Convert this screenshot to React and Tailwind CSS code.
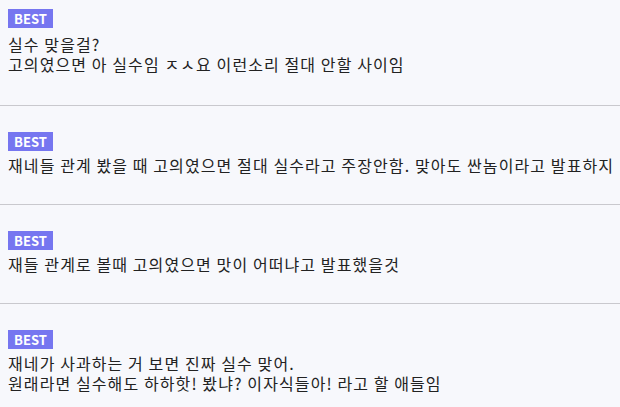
const comments = [
  {
    lines: ["실수 맞을걸?", "고의였으면 아 실수임 ㅈㅅ요 이런소리 절대 안할 사이임"],
    first: true,
  },
  {
    lines: [
      "재네들 관계 봤을 때 고의였으면 절대 실수라고 주장안함. 맞아도 싼놈이라고 발표하지",
    ],
  },
  { lines: ["재들 관계로 볼때 고의였으면 맛이 어떠냐고 발표했을것"] },
  {
    lines: [
      "재네가 사과하는 거 보면 진짜 실수 맞어.",
      "원래라면 실수해도 하하핫! 봤냐? 이자식들아! 라고 할 애들임",
    ],
  },
];

// Best comment badge
const BestBadge = () => (
  <div className="flex h-[19px] w-[45px] items-center justify-center bg-[#7676f0] text-[13px] font-bold leading-none text-white">
    BEST
  </div>
);

const CommentItem = ({ lines, first }) => (
  <div
    className={
      first
        ? "px-2 pt-[9px] pb-[31px] border-b border-[#c9c9ce]"
        : "px-2 pt-[26px] pb-[29px] border-b border-[#c9c9ce]"
    }
  >
    <BestBadge />
    <div
      className={
        first
          ? "mt-[6px] text-[16px] leading-[20px] tracking-[1.1px] text-[#222]"
          : "mt-[4px] text-[16px] leading-[20px] tracking-[1.1px] text-[#222]"
      }
    >
      {lines.map((line, i) => (
        <p key={i} className="h-[20px] whitespace-nowrap">
          {line}
        </p>
      ))}
    </div>
  </div>
);

export default function App() {
  return (
    <div
      className="h-[407px] w-[620px] overflow-hidden bg-[#f7f8fc]"
      style={{ fontFamily: '"Noto Sans CJK KR", "Noto Sans", sans-serif' }}
    >
      {comments.map((c, i) => (
        <CommentItem key={i} lines={c.lines} first={c.first} />
      ))}
    </div>
  );
}
